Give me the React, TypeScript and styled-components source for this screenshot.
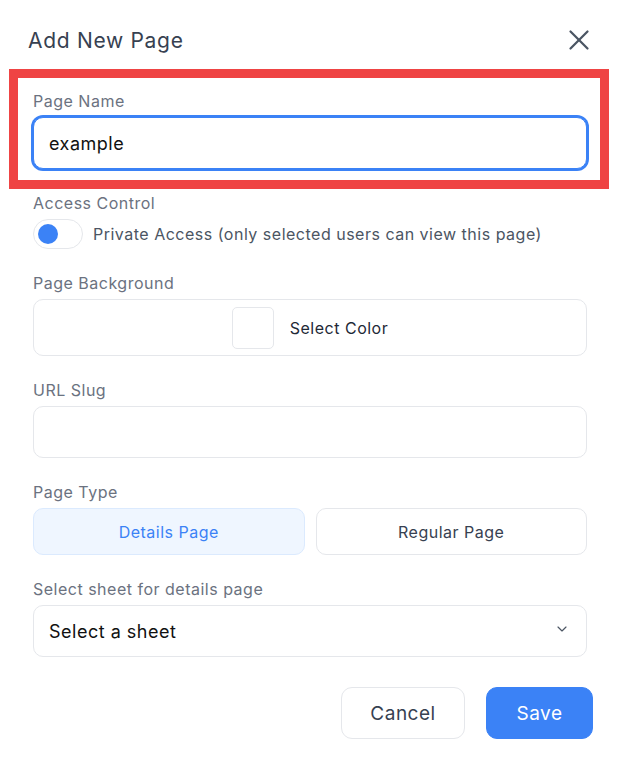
import styled, { createGlobalStyle } from "styled-components";
import { ChevronDown, X } from "lucide-react";

const GlobalStyle = createGlobalStyle`
  * { box-sizing: border-box; }
  body {
    margin: 0;
    background: #ffffff;
    font-family: Inter, "Noto Sans", sans-serif;
    letter-spacing: 0.5px;
  }
`;

const Dialog = styled.div`
  width: 618px;
  padding-top: 22px;
  padding-bottom: 26px;
`;

const Header = styled.header`
  display: flex;
  align-items: center;
  justify-content: space-between;
  height: 36px;
  padding: 0 22px 0 28px;
  margin-bottom: 31px;
`;

const Title = styled.h2`
  margin: 0;
  font-size: 21px;
  font-weight: 400;
  letter-spacing: 0.7px;
  color: #374151;
`;

const CloseButton = styled.button`
  display: flex;
  padding: 0;
  border: none;
  background: none;
  color: #4b5563;
`;

const Form = styled.form`
  display: flex;
  flex-direction: column;
  gap: 22px;
  padding: 0 31px 0 33px;
`;

const Field = styled.div<{ $highlight?: boolean }>`
  position: relative;
  display: flex;
  flex-direction: column;
  gap: 4px;

  ${(p) =>
    p.$highlight &&
    `
    &::after {
      content: "";
      position: absolute;
      inset: -20px -22px -20px -24px;
      border: 9px solid #ef4444;
      pointer-events: none;
    }
  `}
`;

const Label = styled.label`
  font-size: 16px;
  line-height: 24px;
  color: #6b7280;
`;

const TextInput = styled.input<{ $focused?: boolean }>`
  height: 52px;
  width: 100%;
  padding: 0 15px;
  font-family: inherit;
  font-size: 18px;
  letter-spacing: inherit;
  color: #111111;
  background: #ffffff;
  border: 1px solid ${(p) => (p.$focused ? "#3b82f6" : "#e5e7eb")};
  border-radius: 10px;
  outline: none;
  box-shadow: ${(p) => (p.$focused ? "0 0 0 2px #3b82f6" : "none")};
`;

const ToggleRow = styled.div`
  display: flex;
  align-items: center;
  gap: 10px;
`;

const Toggle = styled.span<{ $on?: boolean }>`
  display: flex;
  align-items: center;
  width: 50px;
  height: 30px;
  padding: 0 4px;
  border: 1px solid #e5e7eb;
  border-radius: 15px;
  justify-content: ${(p) => (p.$on ? "flex-end" : "flex-start")};

  &::before {
    content: "";
    width: 20px;
    height: 20px;
    border-radius: 50%;
    background: #3b82f6;
  }
`;

const ToggleText = styled.span`
  font-size: 16px;
  color: #4b5563;
`;

const ColorPicker = styled.button`
  display: flex;
  align-items: center;
  justify-content: center;
  gap: 16px;
  height: 57px;
  width: 100%;
  background: #ffffff;
  border: 1px solid #e5e7eb;
  border-radius: 10px;
  font-family: inherit;
  font-size: 16px;
  letter-spacing: inherit;
  color: #1f2937;
`;

const Swatch = styled.span<{ $color: string }>`
  width: 42px;
  height: 42px;
  border: 1px solid #e5e7eb;
  border-radius: 5px;
  background: ${(p) => p.$color};
`;

const TypeGroup = styled.div`
  display: grid;
  grid-template-columns: 1fr 1fr;
  gap: 11px;
`;

const TypeButton = styled.button<{ $active?: boolean }>`
  height: 47px;
  border-radius: 10px;
  font-family: inherit;
  font-size: 16px;
  letter-spacing: inherit;
  background: ${(p) => (p.$active ? "#eff6ff" : "#ffffff")};
  border: 1px solid ${(p) => (p.$active ? "#dbeafe" : "#e5e7eb")};
  color: ${(p) => (p.$active ? "#3b82f6" : "#374151")};
`;

const Select = styled.div`
  display: flex;
  align-items: center;
  justify-content: space-between;
  height: 52px;
  padding: 0 16px 0 15px;
  border: 1px solid #e5e7eb;
  border-radius: 10px;
  font-size: 18px;
  color: #111111;

  svg {
    margin-top: -4px;
    color: #4b5563;
  }
`;

const Footer = styled.footer`
  display: flex;
  justify-content: flex-end;
  gap: 21px;
  padding: 0 25px;
  margin-top: 30px;
`;

const ActionButton = styled.button<{ $primary?: boolean }>`
  height: 52px;
  border-radius: 11px;
  font-family: inherit;
  font-size: 19px;
  letter-spacing: inherit;
  padding: 0;
  width: ${(p) => (p.$primary ? "107px" : "124px")};
  background: ${(p) => (p.$primary ? "#3b82f6" : "#ffffff")};
  border: 1px solid ${(p) => (p.$primary ? "#3b82f6" : "#e5e7eb")};
  color: ${(p) => (p.$primary ? "#ffffff" : "#374151")};
`;

export default function App() {
  return (
    <>
      <GlobalStyle />
      <Dialog>
        <Header>
          <Title>Add New Page</Title>
          <CloseButton type="button" aria-label="Close">
            <X size={34} strokeWidth={1.6} />
          </CloseButton>
        </Header>

        <Form onSubmit={(e) => e.preventDefault()}>
          <Field $highlight>
            <Label>Page Name</Label>
            <TextInput $focused defaultValue="example" />
          </Field>

          <Field>
            <Label>Access Control</Label>
            <ToggleRow>
              <Toggle />
              <ToggleText>Private Access (only selected users can view this page)</ToggleText>
            </ToggleRow>
          </Field>

          <Field>
            <Label>Page Background</Label>
            <ColorPicker type="button">
              <Swatch $color="#ffffff" />
              Select Color
            </ColorPicker>
          </Field>

          <Field>
            <Label>URL Slug</Label>
            <TextInput />
          </Field>

          <Field>
            <Label>Page Type</Label>
            <TypeGroup>
              <TypeButton type="button" $active>
                Details Page
              </TypeButton>
              <TypeButton type="button">Regular Page</TypeButton>
            </TypeGroup>
          </Field>

          <Field>
            <Label>Select sheet for details page</Label>
            <Select>
              Select a sheet
              <ChevronDown size={16} strokeWidth={1.75} />
            </Select>
          </Field>
        </Form>

        <Footer>
          <ActionButton type="button">Cancel</ActionButton>
          <ActionButton type="button" $primary>
            Save
          </ActionButton>
        </Footer>
      </Dialog>
    </>
  );
}
